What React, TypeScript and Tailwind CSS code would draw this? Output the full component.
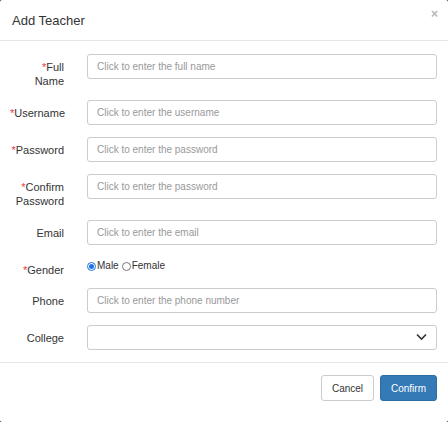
import React from "react";

const inputCls =
  "block h-[25px] w-full rounded-[3px] border border-[#ccc] bg-white px-[9px] text-[10px] text-[#555] placeholder:text-[#999] outline-none";

function Label({ children, required }: { children: React.ReactNode; required?: boolean }) {
  return (
    <div className="w-[54px] shrink-0 pt-[6px] text-right text-[11px] leading-[14px] text-[#333]">
      {required && <span className="text-[#e4393c]">*</span>}
      {children}
    </div>
  );
}

function Row({
  label,
  required,
  tight,
  children,
}: {
  label: React.ReactNode;
  required?: boolean;
  tight?: boolean;
  children: React.ReactNode;
}) {
  return (
    <div className={`flex items-start gap-[23px] ${tight ? "mb-[11px]" : "mb-[12px]"}`}>
      <Label required={required}>{label}</Label>
      <div className="flex-1">{children}</div>
    </div>
  );
}

export default function App() {
  return (
    <div className="h-[422px] w-[448px] bg-[#5b2020]" style={{ fontFamily: '"Liberation Sans", Arial, sans-serif' }}>
      <div className="flex h-full w-full flex-col rounded-[2px] bg-white">
        {/* Header */}
        <div className="relative flex h-[41px] items-center border-b border-[#e5e5e5] px-[12px] pt-[1px]">
          <h2 className="text-[13px] text-[#333]">Add Teacher</h2>
          <button className="absolute right-[10px] top-[8px] text-[12px] font-bold leading-none text-[#b5b5b5]">
            ×
          </button>
        </div>

        {/* Body */}
        <div className="border-b border-[#e5e5e5] pl-[10px] pr-[11px] pt-[13px] pb-[12px]">
          <Row required label={<>Full<br />Name</>}>
            <input className={inputCls} placeholder="Click to enter the full name" />
          </Row>
          <Row required label="Username">
            <input className={inputCls} placeholder="Click to enter the username" />
          </Row>
          <Row required label="Password">
            <input className={inputCls} type="password" placeholder="Click to enter the password" />
          </Row>
          <Row required label={<>Confirm<br />Password</>}>
            <input className={inputCls} type="password" placeholder="Click to enter the password" />
          </Row>
          <Row label="Email">
            <input className={inputCls} placeholder="Click to enter the email" />
          </Row>
          <Row required tight label="Gender">
            <div className="flex items-center pt-[3px] text-[10px] leading-[12px] text-[#333]">
              <span className="mr-[1px] flex h-[9px] w-[9px] items-center justify-center rounded-full border border-[#1a73e8]">
                <span className="h-[5px] w-[5px] rounded-full bg-[#1a73e8]" />
              </span>
              <span>Male</span>
              <span className="ml-[3px] mr-[1px] h-[9px] w-[9px] rounded-full border border-[#777]" />
              <span>Female</span>
            </div>
          </Row>
          <Row label="Phone">
            <input className={inputCls} placeholder="Click to enter the phone number" />
          </Row>
          <div className="flex items-start gap-[23px]">
            <Label>College</Label>
            <div className="relative flex-1">
              <div className="h-[25px] w-full rounded-[3px] border border-[#ccc] bg-white" />
              <svg
                className="absolute right-[10px] top-[8px]"
                width="11"
                height="8"
                viewBox="0 0 11 8"
                fill="none"
              >
                <path d="M1 1.5 L5.5 6 L10 1.5" stroke="#333" strokeWidth="1.6" />
              </svg>
            </div>
          </div>
        </div>

        {/* Footer */}
        <div className="flex flex-1 items-start justify-end gap-[6px] px-[11px] pt-[12px]">
          <button className="h-[26px] w-[53px] rounded-[3px] border border-[#ccc] bg-white text-[10px] text-[#333]">
            Cancel
          </button>
          <button className="h-[26px] w-[57px] rounded-[3px] border border-[#2e6da4] bg-[#337ab7] text-[10px] text-white">
            Confirm
          </button>
        </div>
      </div>
    </div>
  );
}
